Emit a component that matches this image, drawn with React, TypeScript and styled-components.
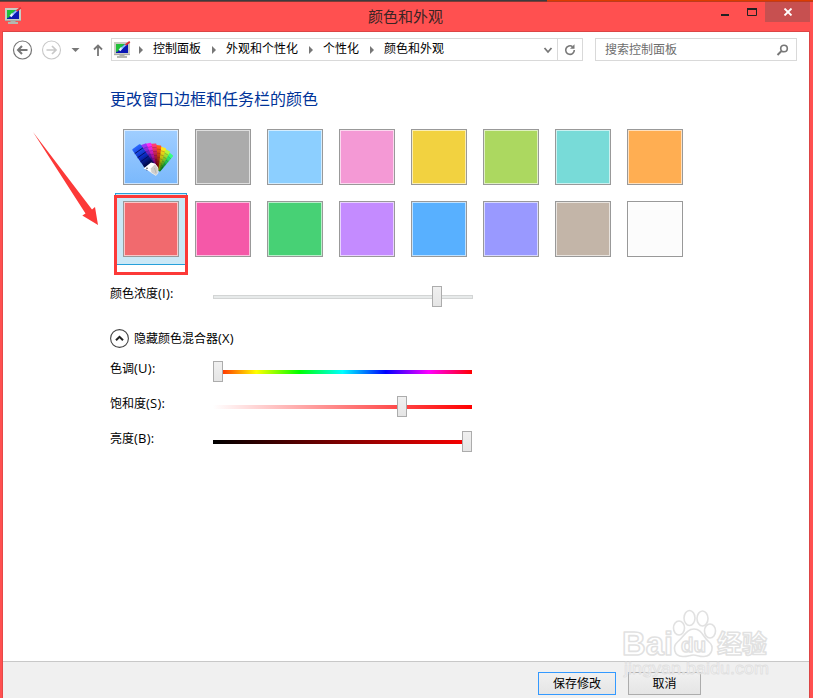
import React from 'react';
import styled, { createGlobalStyle } from 'styled-components';

const GlobalStyle = createGlobalStyle`
  * { box-sizing: border-box; }
  body { margin: 0; background: #fff; overflow: hidden; }
  button { font: inherit; color: inherit; padding: 0; margin: 0; }
  svg { display: block; flex: none; }
`;

const Window = styled.div`
  position: relative;
  width: 813px;
  height: 698px;
  display: flex;
  flex-direction: column;
  background: #ff5050;
  font: 12px/18px 'Open Sans', 'Noto Sans CJK SC', sans-serif;
  color: #000;
`;

const Desktop = styled.div`
  height: 2px;
  flex: none;
  background: linear-gradient(90deg, #3c3b3e 547px, #dc3c00 547px);
  border-bottom: 1px solid rgba(170, 60, 50, 0.6);
`;

const TitleBar = styled.header`
  height: 29px;
  flex: none;
  display: grid;
  grid-template-columns: 108px 1fr 48px 45px 3px;
  padding-left: 5px;
`;

const TitleIcon = styled.div`
  padding-top: 5px;
`;

const Title = styled.h1`
  margin: 0 0 0 -19px;
  padding-top: 2px;
  font-size: 15px;
  line-height: 24px;
  font-weight: 400;
  text-align: center;
  color: #3a2424;
`;

const Controls = styled.div`
  display: flex;
  margin-left: -6px;
  padding-top: 6px;
`;

const Close = styled.button`
  height: 20px;
  border: 0;
  background: #c75050;
  display: grid;
  place-items: center;
`;

const Client = styled.main`
  flex: 1;
  margin: 0 4px 0 3px;
  background: #fff;
  display: flex;
  flex-direction: column;
  border-top: 1px solid #dc4545;
  box-shadow: -1px 0 #e64848, 1px 0 #dc4545;
`;

const Toolbar = styled.nav`
  height: 29px;
  flex: none;
  display: flex;
  padding: 6px 0 0 9px;
`;

const NavIcons = styled.div`
  width: 99px;
  flex: none;
`;

const Address = styled.div`
  width: 472px;
  height: 23px;
  border: 1px solid #d9d9d9;
  display: flex;
  align-items: center;
  padding-left: 2px;
`;

const Crumb = styled.span<{ $w: number }>`
  width: ${(p) => p.$w}px;
  margin-top: -2px;
  white-space: nowrap;
`;

const Sep = styled.span<{ $before: number }>`
  width: 0;
  height: 0;
  border: 4px solid transparent;
  border-left-color: #777;
  border-right-width: 0;
  margin: 0 10px 0 ${(p) => p.$before}px;
`;

const Spacer = styled.span`
  flex: 1;
`;

const AddressButton = styled.button<{ $w: number; $line?: boolean }>`
  width: ${(p) => p.$w}px;
  height: 21px;
  border: 0;
  border-left: ${(p) => (p.$line ? '1px solid #d9d9d9' : '0')};
  background: none;
  display: grid;
  place-items: center;
`;

const Search = styled.div`
  width: 202px;
  height: 23px;
  margin-left: 12px;
  border: 1px solid #d9d9d9;
  display: flex;
  align-items: center;
  justify-content: space-between;
  padding: 0 7px 0 9px;
  color: #6d6d6d;
`;

const Content = styled.section`
  flex: 1;
  padding: 26px 0 0 107px;
`;

const Heading = styled.h2`
  margin: 0;
  font-size: 16px;
  line-height: 24px;
  font-weight: 400;
  color: #003399;
`;

const Palette = styled.div`
  display: grid;
  grid-template-columns: repeat(8, 72px);
  grid-auto-rows: 72px;
  margin: 10px 0 20px 5px;
`;

const Cell = styled.div<{ $selected?: boolean }>`
  position: relative;
  padding: 7px;
  border: 1px solid ${(p) => (p.$selected ? '#26a0da' : 'transparent')};
  background: ${(p) => (p.$selected ? '#cbe8f6' : 'none')};
`;

const Swatch = styled.div<{ $fill: string }>`
  width: 56px;
  height: 56px;
  border: 1px solid #999;
  background: ${(p) => p.$fill};
  box-shadow: inset 0 0 0 1px rgba(255, 255, 255, 0.62);
`;

const Highlight = styled.div`
  position: absolute;
  left: -2px;
  top: 1px;
  width: 74px;
  height: 80px;
  border: 3px solid #fc3938;
`;

const Row = styled.div<{ $h: number }>`
  display: flex;
  height: ${(p) => p.$h}px;
`;

const Label = styled.label`
  width: 103px;
  height: 18px;
  white-space: nowrap;
`;

const AccessKey = styled.span`
  font-size: 13px;
  line-height: 1;
  letter-spacing: 0.25px;
`;

const Slider = styled.div`
  width: 260px;
  height: 21px;
  margin-top: 1px;
  display: flex;
  align-items: center;
  position: relative;
`;

const Track = styled.div<{ $bg: string; $outlined?: boolean }>`
  width: ${(p) => (p.$outlined ? 260 : 259)}px;
  height: 4px;
  background: ${(p) => p.$bg};
  border: ${(p) => (p.$outlined ? '1px solid #d3d5d5' : '0')};
`;

const Thumb = styled.div<{ $at: number }>`
  position: absolute;
  top: 0;
  left: ${(p) => p.$at}px;
  width: 10px;
  height: 21px;
  border: 1px solid #acacac;
  background: linear-gradient(#f0f0f0, #e5e5e5);
`;

const Expander = styled.div`
  height: 31px;
  display: flex;
  gap: 5px;
`;

const ExpanderText = styled.span`
  padding-top: 1px;
`;

const Footer = styled.footer`
  height: 37px;
  flex: none;
  border-top: 1px solid #c8c8c8;
  background: #f0f0f0;
  display: flex;
  gap: 12px;
  padding: 10px 0 0 535px;
`;

const Button = styled.button<{ $w: number; $primary?: boolean }>`
  width: ${(p) => p.$w}px;
  height: 23px;
  padding-top: 1px;
  border: 1px solid ${(p) => (p.$primary ? '#3399ff' : '#acacac')};
  background: linear-gradient(#f0f0f0, #e5e5e5);
`;

const Overlay = styled.svg`
  position: absolute;
  left: 0;
  top: 0;
  pointer-events: none;
`;

const MonitorIcon = () => (
  <svg width="17" height="17" viewBox="0 0 17 17">
    <path d="M0 1h16v13H0z" fill="#c9ccc4" />
    <path d="M2 3h12v9H2z" fill="#0b18b4" />
    <path d="M2 3h9L5.500 8 4 10.500 2 11z" fill="#22c03a" />
    <path d="M5.500 9.500L8 6.500" stroke="#eaf3ff" strokeWidth="2.200" fill="none" />
    <path d="M7.500 7.300L12 3.300" stroke="#8fc0ff" strokeWidth="1.800" />
    <path d="M11.500 4L15.800 .8" stroke="#df3038" strokeWidth="1.800" />
    <path d="M5.500 14h5v1h2.500v2H3v-2h2.500z" fill="#b5b8b0" />
    <path d="M0 13.700h16" stroke="#888c86" strokeWidth=".6" />
  </svg>
);

const NavDrawing = () => (
  <svg width="99" height="23" viewBox="12 38 99 23" fill="none">
    <g stroke="#767676">
      <circle cx="22.500" cy="50" r="9" strokeWidth="1.200" />
      <path d="M27.500 50H18.500M22 46l-4 4 4 4" strokeWidth="2" />
    </g>
    <g stroke="#c8c8c8">
      <circle cx="51.500" cy="50" r="9" strokeWidth="1.100" />
      <path d="M46.500 50H55.500M52 46l4 4-4 4" strokeWidth="1.700" />
    </g>
    <path d="M71.500 48h8l-4 4z" fill="#777" />
    <path d="M98 56V45.500M94 49.500l4-4 4 4" stroke="#777" strokeWidth="1.800" />
  </svg>
);

/* angle, length, light colour, dark colour of each card in the fan */
const fans: [number, number, string, string][] = [
  [40, 25, '#35ff80', '#087a20'],
  [29, 26, '#b5f83a', '#3c8a10'],
  [18, 27, '#ffe51c', '#7d8f00'],
  [7, 28, '#ff5a18', '#7a1a00'],
  [-3, 29.5, '#ff3b77', '#6b0018'],
  [-13, 30.5, '#fc2bf4', '#6c005e'],
  [-22, 31, '#9a35f5', '#2a0569'],
];

const FanIcon = () => (
  <svg width="54" height="54" viewBox="124 130 54 54">
    <defs>
      {fans.map(([a, , c1, c2]) => (
        <linearGradient key={a} id={`fan${a}`} x1="0" y1="0" x2="0" y2="1">
          <stop offset=".1" stopColor={c1} />
          <stop offset=".8" stopColor={c2} />
        </linearGradient>
      ))}
      <linearGradient id="fanBlue" x1="0" y1="0" x2="0" y2="1">
        <stop offset="0" stopColor="#2b68ff" />
        <stop offset=".45" stopColor="#0a2bc0" />
        <stop offset=".85" stopColor="#020840" />
      </linearGradient>
    </defs>
    {fans.map(([a, len]) => (
      <g key={a} transform={`rotate(${a} 155 173)`}>
        <rect x="152" y={173 - len} width="6" height={len - 4} rx=".8" fill={`url(#fan${a})`} />
        <path
          d={[4, 8, 12, 16].map((d) => `M152 ${173 - len + d}h6`).join('')}
          stroke="#300030"
          strokeOpacity=".35"
          strokeWidth=".6"
        />
      </g>
    ))}
    <g transform="rotate(-35 155 173)">
      <rect x="149.500" y="140.500" width="10" height="26" rx="1" fill="url(#fanBlue)" />
      <path d="M149.500 145.500h10M149.500 150.500h10M149.500 155.500h10M149.500 160.500h10" stroke="#020a55" strokeWidth=".8" />
    </g>
    <path d="M143.500 168.500l7.500-6 4 1 3 4-3 7-4-2-4-2.500z" fill="#fff" />
    <path d="M150.500 168.500l4.500-4.500 3 4 0 5-2 2.500-5-3z" fill="#cfcfcc" stroke="#f6f6f6" strokeWidth=".6" />
    <circle cx="147" cy="168.300" r=".7" fill="#222" />
    <path d="M154.500 168l1.500 5" stroke="#aaa" strokeWidth=".7" />
  </svg>
);

const Watermark = () => (
  <g fill="#fff" fillOpacity=".5" stroke="#dcdcdc" strokeOpacity=".85" strokeWidth="1.600" strokeLinejoin="round">
    <text x="622" y="655" fontFamily="Liberation Sans, sans-serif" fontWeight="700" fontSize="33" textLength="51" lengthAdjust="spacingAndGlyphs">Bai</text>
    <ellipse cx="679" cy="628" rx="5.500" ry="7" />
    <ellipse cx="689.500" cy="618" rx="5.500" ry="7.500" />
    <ellipse cx="702.500" cy="618.500" rx="5.500" ry="7.500" />
    <ellipse cx="710" cy="631" rx="5.500" ry="7" />
    <path d="M694 629c8 0 9 8 15 13 5 4 4 14-5 14.500-5 .3-7-1.500-10.500-1.500s-6 1.800-11 1.500c-9-.5-10-10-5-14.500 6-5 9-13 16.500-13z" />
    <text x="681" y="651.500" fontFamily="Liberation Sans, sans-serif" fontWeight="700" fontSize="21" textLength="25" lengthAdjust="spacingAndGlyphs">du</text>
    <text x="717" y="653" fontFamily="Noto Sans CJK SC, sans-serif" fontWeight="700" fontSize="25">经验</text>
    <text x="624" y="674" fontFamily="Liberation Sans, sans-serif" fontSize="17" strokeWidth=".9" fillOpacity=".8" textLength="145" lengthAdjust="spacingAndGlyphs">jingyan.baidu.com</text>
  </g>
);

const colors = [
  'linear-gradient(#a0ceff, #7ab8fc)', '#ababab', '#8ccfff', '#f499d5', '#f2d240', '#acd860', '#78dbd8', '#ffae52',
  '#f16a6e', '#f558a8', '#47d175', '#c48bff', '#58b0ff', '#9999ff', '#c3b5a8', '#fcfcfc',
];

const sliders = [
  { label: '色调', hotkey: '(U):', at: 0, bg: 'linear-gradient(90deg, red, #ff0 16.7%, #0f0 33.3%, #0ff 50%, #00f 66.7%, #f0f 83.3%, red)' },
  { label: '饱和度', hotkey: '(S):', at: 184, bg: 'linear-gradient(90deg, #fff, red)' },
  { label: '亮度', hotkey: '(B):', at: 249, bg: 'linear-gradient(90deg, #000, red)' },
];

export default function App() {
  return (
    <>
      <GlobalStyle />
      <Window>
        <Desktop />
        <TitleBar>
          <TitleIcon><MonitorIcon /></TitleIcon>
          <Title>颜色和外观</Title>
          <Controls>
            <svg width="48" height="12" viewBox="0 0 48 12">
              <path d="M10 6h8v2h-8z" fill="#222" />
              <path d="M36.500 1v6.500h9V1" fill="none" stroke="#222" />
              <path d="M36 0h10v2H36z" fill="#222" />
            </svg>
          </Controls>
          <Close aria-label="关闭">
            <svg width="10" height="8" viewBox="0 0 10 8">
              <path d="M1.500 .5l7 7M8.500 .5l-7 7" stroke="#fff" strokeWidth="1.800" />
            </svg>
          </Close>
        </TitleBar>
        <Client>
          <Toolbar>
            <NavIcons><NavDrawing /></NavIcons>
            <Address>
              <MonitorIcon />
              <Sep $before={8} />
              <Crumb $w={48}>控制面板</Crumb>
              <Sep $before={11} />
              <Crumb $w={72}>外观和个性化</Crumb>
              <Sep $before={11} />
              <Crumb $w={36}>个性化</Crumb>
              <Sep $before={11} />
              <Crumb $w={60}>颜色和外观</Crumb>
              <Spacer />
              <AddressButton $w={18} aria-label="展开">
                <svg width="10" height="8" viewBox="0 0 10 8">
                  <path d="M1.500 2l3.500 4 3.500-4" fill="none" stroke="#777" strokeWidth="1.800" />
                </svg>
              </AddressButton>
              <AddressButton $w={25} $line aria-label="刷新">
                <svg width="12" height="12" viewBox="0 0 12 12">
                  <path d="M8.500 2.600A4.300 4.300 0 1 0 10.300 6" fill="none" stroke="#777" strokeWidth="1.600" />
                  <path d="M10.500 .2v4.600H6z" fill="#777" />
                </svg>
              </AddressButton>
            </Address>
            <Search>
              <span>搜索控制面板</span>
              <svg width="13" height="12" viewBox="0 0 13 12">
                <circle cx="8" cy="4.500" r="3.300" fill="none" stroke="#777" strokeWidth="1.600" />
                <path d="M5.500 7L1.500 11" stroke="#777" strokeWidth="2" />
              </svg>
            </Search>
          </Toolbar>
          <Content>
            <Heading>更改窗口边框和任务栏的颜色</Heading>
            <Palette>
              {colors.map((c, i) => (
                <Cell key={c} $selected={i === 8}>
                  <Swatch $fill={c}>{i === 0 && <FanIcon />}</Swatch>
                  {i === 8 && <Highlight />}
                </Cell>
              ))}
            </Palette>
            <Row $h={44}>
              <Label>颜色浓度<AccessKey>(I):</AccessKey></Label>
              <Slider>
                <Track $outlined $bg="#e7eaea" />
                <Thumb $at={219} />
              </Slider>
            </Row>
            <Expander>
              <svg width="19" height="19" viewBox="0 0 19 19" fill="none">
                <circle cx="9.500" cy="9.500" r="8.900" stroke="#444" strokeWidth="1.100" />
                <path d="M6 11.300l3.500-3.500 3.500 3.500" stroke="#222" strokeWidth="2" />
              </svg>
              <ExpanderText>隐藏颜色混合器<AccessKey>(X)</AccessKey></ExpanderText>
            </Expander>
            {sliders.map((s) => (
              <Row key={s.label} $h={35}>
                <Label>{s.label}<AccessKey>{s.hotkey}</AccessKey></Label>
                <Slider>
                  <Track $bg={s.bg} />
                  <Thumb $at={s.at} />
                </Slider>
              </Row>
            ))}
          </Content>
          <Footer>
            <Button $w={78} $primary>保存修改</Button>
            <Button $w={73}>取消</Button>
          </Footer>
        </Client>
        <Overlay width="813" height="698" viewBox="0 0 813 698">
          <path d="M33 132L92 209.500 95 207 98 225 82.300 215.500 85.500 213.500z" fill="#fc3938" />
          <Watermark />
        </Overlay>
      </Window>
    </>
  );
}
